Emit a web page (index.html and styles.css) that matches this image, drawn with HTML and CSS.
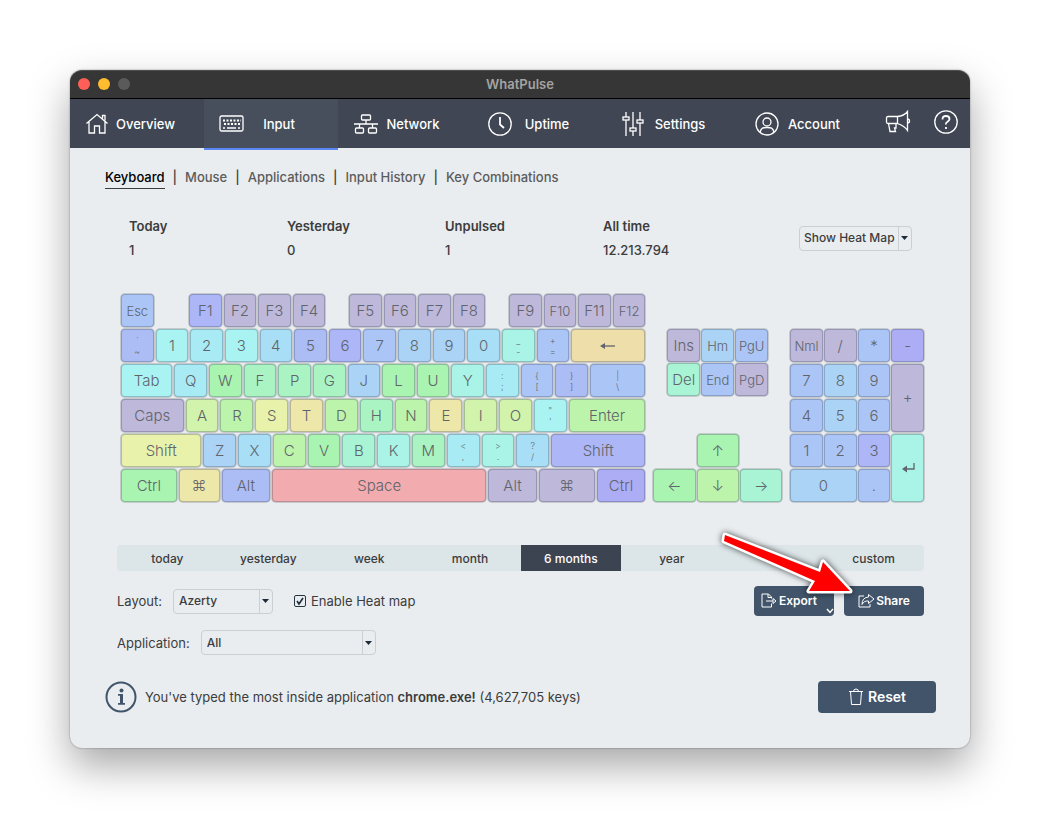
FILE: index.html
```html
<!DOCTYPE html>
<html lang="en">
<head>
  <meta charset="UTF-8" />
  <title>WhatPulse</title>
  <link rel="stylesheet" href="styles.css">
</head>
<body>
  <div class="window">
    <header class="titlebar">
      <div class="lights">
        <span class="light red"></span>
        <span class="light yellow"></span>
        <span class="light gray"></span>
      </div>
      <h1>WhatPulse</h1>
    </header>

    <nav class="main-nav">
      <a href="#overview" class="tab">
        <svg width="24" height="24" viewBox="0 0 24 24"><path d="M1.5 11.5 12 2.5l10.500 9M4 10v11h5.500v-7h5v7H20V10M17.500 6.500V3.500H20v5" /></svg>
        <span>Overview</span>
      </a>
      <a href="#input" class="tab active">
        <svg width="26" height="24" viewBox="0 0 26 24"><rect x="1" y="4" width="23" height="15" rx="1.500" /><path d="M4 8.500h18M5 12h17" stroke-width="2" stroke-dasharray="2 1.500" /><path d="M4 16h2M8 16h9M19 16h2" /></svg>
        <span>Input</span>
      </a>
      <a href="#network" class="tab">
        <svg width="26" height="24" viewBox="0 0 26 24"><rect x="8.500" y="3" width="9" height="5" rx="1" /><path d="M13 8v4M1 12h24M6.500 12v4M19.500 12v4" /><rect x="2.500" y="16" width="8" height="5" rx="1" /><rect x="15.500" y="16" width="8" height="5" rx="1" /></svg>
        <span>Network</span>
      </a>
      <a href="#uptime" class="tab">
        <svg width="26" height="26" viewBox="0 0 26 26"><circle cx="13" cy="13" r="11.200" /><path d="M13 6v7.500l4 3.500" stroke-width="1.800" /></svg>
        <span>Uptime</span>
      </a>
      <a href="#settings" class="tab">
        <svg width="24" height="26" viewBox="0 0 24 26"><path d="M5 1v5M5 9v16M12 1v16M12 20v5M19 1v8M19 12v13" /><rect x="2" y="6" width="6" height="3" /><rect x="9" y="17" width="6" height="3" /><rect x="16" y="9" width="6" height="3" /></svg>
        <span>Settings</span>
      </a>
      <a href="#account" class="tab">
        <svg width="24" height="26" viewBox="0 0 24 26"><circle cx="12" cy="13" r="11" /><circle cx="12" cy="11" r="4" /><path d="M5 21.500c1-5 3-5 7-5s6 0 7 5" /></svg>
        <span>Account</span>
      </a>
      <a href="#news" class="tool" aria-label="News">
        <svg width="26" height="24" viewBox="0 0 26 24"><path d="M12.500 6.500H3Q1.500 6.500 1.500 8v4Q1.500 13.500 3 13.500h9.500zM12.500 6.500Q19 6 22.500 1.500v19Q19 15.500 12.500 13.500M3.500 13.500l1.500 8h5.500l-1-3.500h1.500v-4.500M22.500 9q2 0 2 2t-2 2" /></svg>
      </a>
      <a href="#help" class="tool" aria-label="Help">
        <svg width="26" height="26" viewBox="0 0 26 26"><circle cx="13" cy="13" r="11.200" /><path d="M9.500 10.500q0-3.500 3.500-3.500t3.500 3q0 1.500-2 2.700T13 15.500M13 18v2" stroke-width="1.800" /></svg>
      </a>
    </nav>

    <main>
      <nav class="sub-nav">
        <a href="#keyboard" class="active">Keyboard</a>
        <span>|</span>
        <a href="#mouse">Mouse</a>
        <span>|</span>
        <a href="#applications">Applications</a>
        <span>|</span>
        <a href="#history">Input History</a>
        <span>|</span>
        <a href="#combinations">Key Combinations</a>
      </nav>

      <div class="summary">
        <dl class="stats">
          <div><dt>Today</dt><dd>1</dd></div>
          <div><dt>Yesterday</dt><dd>0</dd></div>
          <div><dt>Unpulsed</dt><dd>1</dd></div>
          <div><dt>All time</dt><dd>12.213.794</dd></div>
        </dl>
        <select class="select view-select" aria-label="View">
          <option>Show Heat Map</option>
        </select>
      </div>

      <div class="keyboard">
        <div class="main-keys">
          <div class="row">
            <span class="key h4 small">Esc</span>
            <span class="space-l"></span>
            <span class="key h2">F1</span>
            <span class="key h0">F2</span>
            <span class="key h0">F3</span>
            <span class="key h0">F4</span>
            <span class="space-s"></span>
            <span class="key h0">F5</span>
            <span class="key h0">F6</span>
            <span class="key h0">F7</span>
            <span class="key h0">F8</span>
            <span class="space-s"></span>
            <span class="key h0">F9</span>
            <span class="key h0 small">F10</span>
            <span class="key h0">F11</span>
            <span class="key h0 small">F12</span>
          </div>
          <div class="row">
            <span class="key h3 dual">`<br>~</span>
            <span class="key h8">1</span>
            <span class="key h7">2</span>
            <span class="key h8">3</span>
            <span class="key h6">4</span>
            <span class="key h3">5</span>
            <span class="key h2">6</span>
            <span class="key h4">7</span>
            <span class="key h5">8</span>
            <span class="key h5">9</span>
            <span class="key h6">0</span>
            <span class="key h9 dual">_<br>-</span>
            <span class="key h4 dual">+<br>=</span>
            <span class="key h17 backspace"><svg width="16" height="8" viewBox="0 0 16 8"><path d="M15 4H2" /><path class="fill" d="M0 4l5-3v6z" /></svg></span>
          </div>
          <div class="row">
            <span class="key h8 tab-key">Tab</span>
            <span class="key h7">Q</span>
            <span class="key h12">W</span>
            <span class="key h11">F</span>
            <span class="key h11">P</span>
            <span class="key h11">G</span>
            <span class="key h5">J</span>
            <span class="key h12">L</span>
            <span class="key h12">U</span>
            <span class="key h9">Y</span>
            <span class="key h7 dual">:<br>;</span>
            <span class="key h4 dual">{<br>[</span>
            <span class="key h3 dual">}<br>]</span>
            <span class="key h4 dual backslash">|<br>\</span>
          </div>
          <div class="row">
            <span class="key h0 caps">Caps</span>
            <span class="key h14">A</span>
            <span class="key h13">R</span>
            <span class="key h15">S</span>
            <span class="key h16">T</span>
            <span class="key h13">D</span>
            <span class="key h11">H</span>
            <span class="key h13">N</span>
            <span class="key h16">E</span>
            <span class="key h14">I</span>
            <span class="key h14">O</span>
            <span class="key h8 dual">"<br>'</span>
            <span class="key h13 enter">Enter</span>
          </div>
          <div class="row">
            <span class="key h15 shift-left">Shift</span>
            <span class="key h5">Z</span>
            <span class="key h6">X</span>
            <span class="key h13">C</span>
            <span class="key h12">V</span>
            <span class="key h10">B</span>
            <span class="key h9">K</span>
            <span class="key h11">M</span>
            <span class="key h7 dual">&lt;<br>,</span>
            <span class="key h9 dual">&gt;<br>.</span>
            <span class="key h6 dual">?<br>/</span>
            <span class="key h2 shift-right">Shift</span>
          </div>
          <div class="row">
            <span class="key h12 mod-wide">Ctrl</span>
            <span class="key h16 mod-narrow">⌘</span>
            <span class="key h3 mod">Alt</span>
            <span class="key h18 spacebar">Space</span>
            <span class="key h0 mod">Alt</span>
            <span class="key h0 mod-wide">⌘</span>
            <span class="key h1 mod">Ctrl</span>
          </div>
        </div>

        <div class="cursor-keys">
          <div class="edit-keys">
            <span class="key h0">Ins</span>
            <span class="key h5 small">Hm</span>
            <span class="key h4 small">PgU</span>
            <span class="key h10">Del</span>
            <span class="key h4 small">End</span>
            <span class="key h0 small">PgD</span>
          </div>
          <div class="arrow-keys">
            <span class="key h12 up">↑</span>
            <span class="key h12">←</span>
            <span class="key h13">↓</span>
            <span class="key h10">→</span>
          </div>
        </div>

        <div class="numpad">
          <span class="key h0 small">Nml</span>
          <span class="key h0">/</span>
          <span class="key h4">*</span>
          <span class="key h1">-</span>
          <span class="key h4">7</span>
          <span class="key h5">8</span>
          <span class="key h4">9</span>
          <span class="key h0 tall">+</span>
          <span class="key h4">4</span>
          <span class="key h5">5</span>
          <span class="key h4">6</span>
          <span class="key h4">1</span>
          <span class="key h4">2</span>
          <span class="key h2">3</span>
          <span class="key h9 tall"><svg width="14" height="12" viewBox="0 0 14 12"><path d="M13 1v6H3" /><path class="fill" d="M1 7l5-3.500v7z" /></svg></span>
          <span class="key h5 wide">0</span>
          <span class="key h4">.</span>
        </div>
      </div>

      <div class="range">
        <button type="button">today</button>
        <button type="button">yesterday</button>
        <button type="button">week</button>
        <button type="button">month</button>
        <button type="button" class="active">6 months</button>
        <button type="button">year</button>
        <button type="button"></button>
        <button type="button">custom</button>
      </div>

      <div class="options">
        <label for="layout">Layout:</label>
        <select id="layout" class="select layout-select">
          <option>Azerty</option>
        </select>
        <input type="checkbox" id="heatmap" checked />
        <label for="heatmap">Enable Heat map</label>

        <div class="actions">
          <button type="button" class="btn export">
            <svg width="17" height="16" viewBox="0 0 17 16"><path d="M10.500 5.500V4l-3-3H1v13h9.500v-3.500M7 1v3.500h3.500M5 8h7" /><path d="M12 5.500 15 8l-3 2.500z" /></svg>
            Export
            <svg class="chevron" width="8" height="6" viewBox="0 0 8 6"><path d="M1 1l3 3.500L7 1" /></svg>
          </button>
          <button type="button" class="btn">
            <svg width="17" height="16" viewBox="0 0 17 16"><path d="M6 3H1v11h11v-3" /><path d="M10.500 1.500 16 6l-5.500 4.500V8Q6 7.500 4 11.500 4 4.500 10.500 4z" /></svg>
            Share
          </button>
          <svg class="pointer" width="145" height="75" viewBox="0 0 145 75"><path d="M10 10 9 16 100 56 94 66 135 66 108 37 105 47z" /></svg>
        </div>
      </div>

      <div class="options application">
        <label for="application">Application:</label>
        <select id="application" class="select app-select">
          <option>All</option>
        </select>
      </div>

      <footer class="info">
        <svg class="info-icon" width="32" height="32" viewBox="0 0 32 32"><circle cx="16" cy="16" r="14.500" /><path class="fill" d="M13 13h5v9h2v1.800h-7V22h2v-7.200h-2z" /><circle class="fill" cx="16.500" cy="9.500" r="2" /></svg>
        <p>You've typed the most inside application <b>chrome.exe!</b> (4,627,705 keys)</p>
        <button type="button" class="btn reset">
          <svg width="16" height="18" viewBox="0 0 16 18"><path d="M1 3.500h14M5.500 3.500Q5.500 1 8 1t2.500 2.500M2.500 3.500l1 13h9l1-13" /></svg>
          Reset
        </button>
      </footer>
    </main>
  </div>
</body>
</html>
```
FILE: styles.css
```css
* {
  box-sizing: border-box;
}

body {
  margin: 0;
  background: #fff;
  color: #3c3c3c;
  font-family: 'Inter', sans-serif;
  font-size: 13px;
  font-weight: 500;
  line-height: 16px;
}

a {
  color: inherit;
  text-decoration: none;
}

button,
select {
  font: inherit;
  color: inherit;
}

svg {
  fill: none;
  stroke: currentColor;
  stroke-width: 1.3;
  flex-shrink: 0;
}

svg .fill {
  fill: currentColor;
  stroke: none;
}

.window {
  margin: 70px;
  border-radius: 12px;
  background: #e9edf0;
  box-shadow: 0 0 2px rgba(0, 0, 0, 0.4), 0 18px 40px rgba(0, 0, 0, 0.35);
}

/* Title bar */
.titlebar {
  display: grid;
  grid-template-columns: 1fr auto 1fr;
  align-items: center;
  height: 29px;
  padding: 0 8px 1px;
  background: #363636;
  border-top: 1px solid #4c4f50;
  border-bottom: 1px solid #000;
  border-radius: 12px 12px 0 0;
}

.lights {
  display: flex;
  gap: 8px;
}

.light {
  width: 12px;
  height: 12px;
  border-radius: 50%;
}

.red { background: #ff5f57; }
.yellow { background: #febc2e; }
.gray { background: #5a5a5a; }

h1 {
  margin: 0;
  font-size: 13px;
  font-weight: 600;
  color: #a3a3a3;
}

/* Main navigation */
.main-nav {
  display: flex;
  height: 49px;
  background: #404653;
  color: #fff;
}

.tab {
  display: flex;
  flex: 134 1 134px;
  align-items: center;
  height: 51px;
  padding: 0 25px 0 15px;
  border-bottom: 2px solid transparent;
}

.tab span {
  flex: 1;
  text-align: center;
}

.tab:first-child span {
  flex: none;
  padding-left: 7px;
}

.tab.active {
  background: #474f5d;
  border-color: #5b87f7;
}

.tool {
  display: flex;
  flex: 48 1 48px;
  align-items: center;
  justify-content: center;
  padding-bottom: 3px;
}

/* Content */
main {
  padding: 21px 34px 35px 35px;
}

.sub-nav {
  display: flex;
  gap: 8px;
  color: #5c5c5c;
}

.sub-nav a {
  padding-bottom: 3px;
  border-bottom: 1px solid transparent;
}

.sub-nav span {
  color: #3c3c3c;
}

.sub-nav .active {
  color: #000;
  border-color: #3c3c3c;
}

.summary {
  display: flex;
  align-items: center;
  justify-content: space-between;
  margin: 29px 24px 0;
}

.stats {
  display: flex;
  flex: 1;
  margin: 0;
}

.stats div {
  width: 158px;
}

.stats dt {
  font-weight: 600;
}

.stats dd {
  margin: 8px 0 0;
}

.select {
  appearance: none;
  height: 25px;
  padding: 0 14px 0 5px;
  border: 1px solid #cbcfd2;
  border-radius: 4px;
  font-size: 12px;
  background:
    url("data:image/svg+xml,%3Csvg xmlns='http://www.w3.org/2000/svg' width='7' height='4'%3E%3Cpath d='M0 0h7L3.500 4z' fill='%231d2b3a'/%3E%3C/svg%3E") right 3px center / 7px 4px no-repeat,
    linear-gradient(#cbcfd2, #cbcfd2) right 12px top / 1px 100% no-repeat;
}

.view-select {
  width: 113px;
  padding-left: 4px;
}

/* Keyboard */
.keyboard {
  display: flex;
  gap: 8px;
  margin: 36px 12px 0 16px;
}

.main-keys {
  display: flex;
  flex: 525 1 0;
  flex-direction: column;
  gap: 2px;
}

.row {
  display: flex;
  gap: 2px;
}

.key {
  display: flex;
  flex: 33 1 33px;
  align-items: center;
  justify-content: center;
  min-width: 0;
  height: 33px;
  border: 1px solid rgba(60, 70, 90, 0.3);
  border-radius: 4px;
  box-shadow: 0 0 0 1px #c6cacd;
  color: #60646b;
  font-size: 15px;
  font-weight: 300;
}

.small {
  font-size: 13px;
}

.dual {
  font-size: 9px;
  line-height: 11px;
  text-align: center;
}

.space-l { flex: 32 1 32px; }
.space-s { flex: 20 1 20px; }
.backspace { flex: 75 1 75px; }
.tab-key { flex: 52 1 52px; }
.backslash { flex: 56 1 56px; }
.caps { flex: 63 1 63px; }
.enter { flex: 77 1 77px; }
.shift-left { flex: 81 1 81px; }
.shift-right { flex: 95 1 95px; }
.mod { flex: 49 1 49px; }
.mod-wide { flex: 56 1 56px; }
.mod-narrow { flex: 41 1 41px; }
.spacebar { flex: 215 1 215px; }

.cursor-keys {
  display: flex;
  flex: 129 1 0;
  flex-direction: column;
  justify-content: space-between;
  padding-top: 35px;
}

.edit-keys {
  display: grid;
  grid-template-columns: repeat(3, 1fr);
  gap: 1px;
  margin: 0 14px;
}

.arrow-keys {
  display: grid;
  grid-template-columns: repeat(3, 1fr);
  gap: 2px 1px;
}

.up {
  grid-column: 2;
}

.up + .key {
  grid-column: 1;
}

.numpad {
  display: grid;
  flex: 134 1 0;
  grid-template-columns: repeat(4, 1fr);
  grid-auto-rows: 33px;
  gap: 2px 1px;
  padding-top: 35px;
}

.tall {
  grid-row: span 2;
  height: auto;
}

.wide {
  grid-column: span 2;
}

/* Heat colors, from unused to most used */
.h0 { background: #beb8db; }
.h1 { background: #adadf5; }
.h2 { background: #adb6f6; }
.h3 { background: #acbdf5; }
.h4 { background: #abc6f6; }
.h5 { background: #aad3f5; }
.h6 { background: #a9dff6; }
.h7 { background: #a9ebf5; }
.h8 { background: #a9f3f3; }
.h9 { background: #a9f4e6; }
.h10 { background: #a9f4d5; }
.h11 { background: #aaf4c4; }
.h12 { background: #aaf4b2; }
.h13 { background: #bdf4ab; }
.h14 { background: #d2f3ab; }
.h15 { background: #e8f2ab; }
.h16 { background: #eee7aa; }
.h17 { background: #eedfaa; }
.h18 { background: #f2abae; }

/* Time range */
.range {
  display: grid;
  grid-template-columns: repeat(8, 1fr);
  margin: 43px 12px 0;
  border-radius: 4px;
  background: #dce5e8;
  overflow: hidden;
}

.range button {
  height: 26px;
  padding: 1px 0 0;
  border: none;
  background: none;
  font-size: 12px;
}

.range .active {
  background: #3c4452;
  color: #fff;
}

/* Options */
.options {
  display: flex;
  align-items: center;
  margin: 15px 12px 0;
}

.options label {
  font-weight: 400;
}

.layout-select {
  width: 100px;
  margin: 0 21px 0 11px;
}

.app-select {
  width: 175px;
  margin-left: 11px;
}

.application {
  margin-top: 14px;
}

input[type="checkbox"] {
  appearance: none;
  width: 12px;
  height: 12px;
  margin: 0 5px 0 0;
  border: 1px solid #2a3542;
  border-radius: 2px;
  background: url("data:image/svg+xml,%3Csvg xmlns='http://www.w3.org/2000/svg' width='10' height='10'%3E%3Cpath d='M2 5l2 3 4-6' fill='none' stroke='%231d2b3a' stroke-width='1.600'/%3E%3C/svg%3E") center no-repeat;
}

.actions {
  display: flex;
  gap: 10px;
  position: relative;
  margin-left: auto;
}

.btn {
  display: flex;
  align-items: center;
  justify-content: center;
  gap: 1px;
  width: 80px;
  height: 30px;
  padding: 0;
  border: none;
  border-radius: 4px;
  background: #41546a;
  color: #fff;
  font-size: 12px;
  font-weight: 600;
}

.btn svg {
  stroke-width: 1;
}

.export {
  position: relative;
  padding-right: 10px;
}

.btn .chevron {
  position: absolute;
  right: 0;
  bottom: 2px;
  stroke-width: 1.4;
}

.pointer {
  position: absolute;
  top: -61px;
  right: 64px;
  fill: #f00;
  stroke: #fff;
  stroke-width: 5;
  stroke-linejoin: round;
  paint-order: stroke;
  filter: drop-shadow(0 0 3px rgba(0, 0, 0, 0.7));
  pointer-events: none;
}

/* Info */
.info {
  display: flex;
  align-items: center;
  margin-top: 26px;
}

.info p {
  flex: 1;
  margin: 0 0 0 8px;
  font-weight: 400;
}

.info b {
  font-weight: 600;
}

.info-icon {
  color: #41546a;
  stroke-width: 2;
}

.reset {
  gap: 4px;
  width: 118px;
  height: 32px;
  font-size: 14px;
}
```
